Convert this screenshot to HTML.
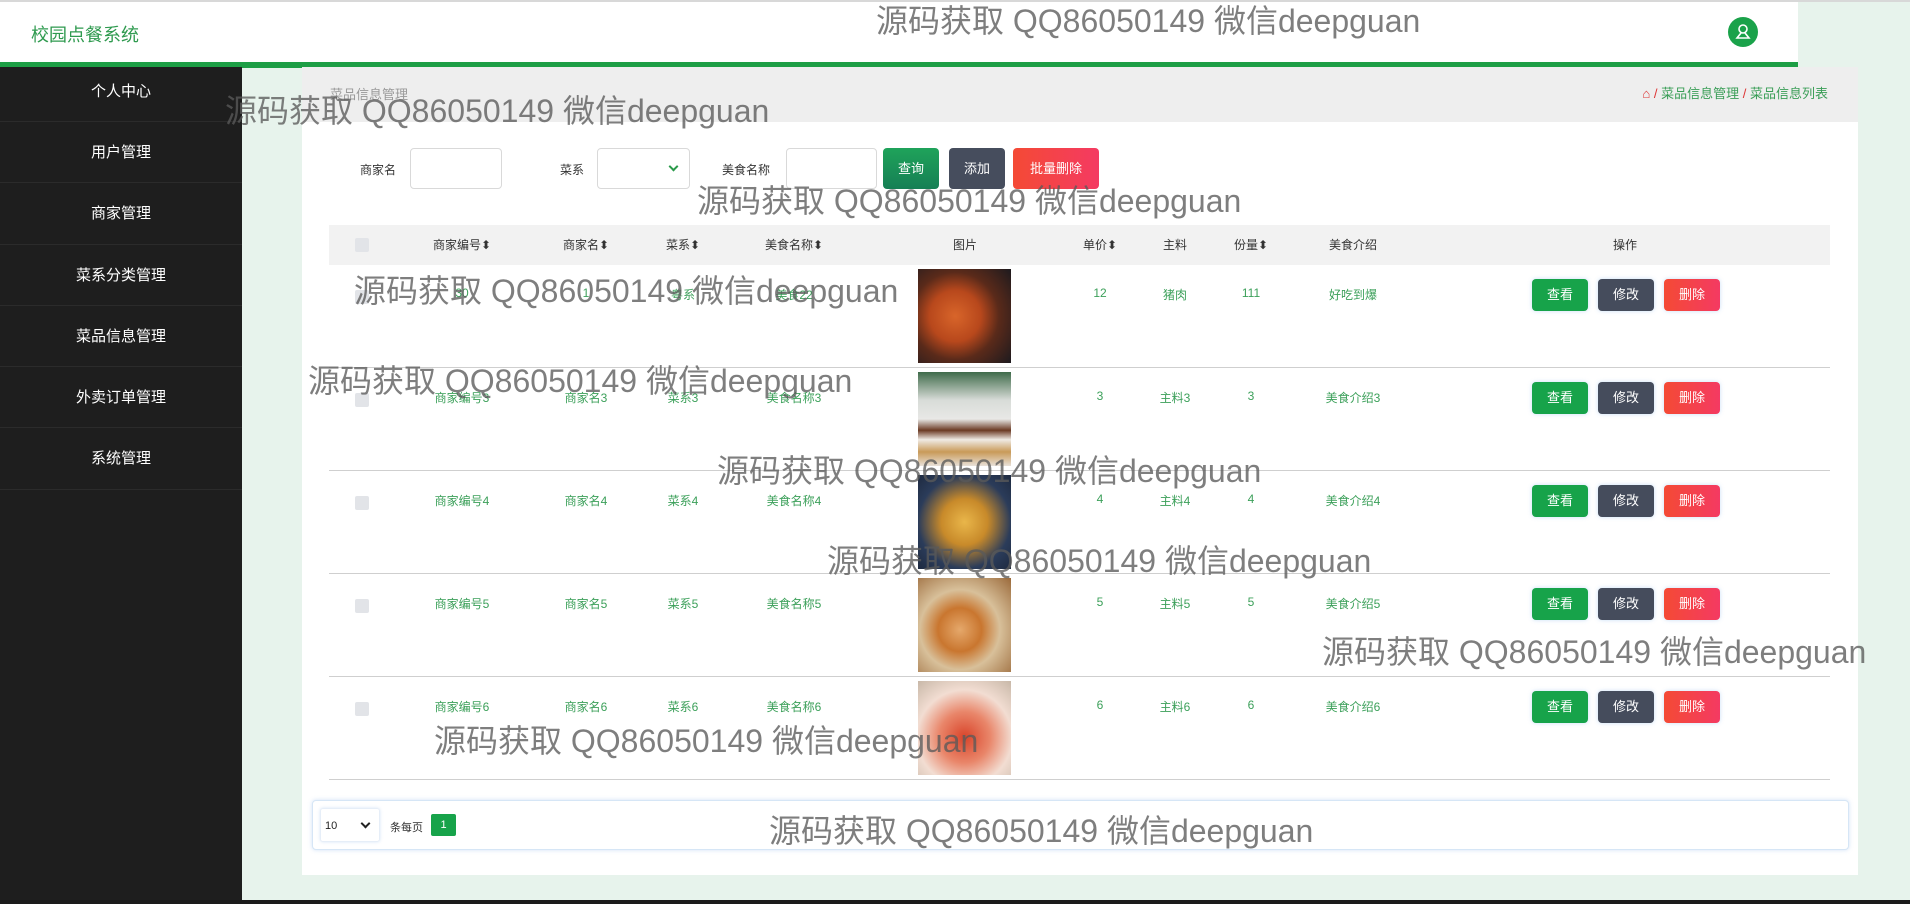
<!DOCTYPE html>
<html><head><meta charset="utf-8"><style>
*{margin:0;padding:0;box-sizing:border-box}
body{width:1910px;height:904px;overflow:hidden;background:#e7f3ec;font-family:"Liberation Sans","Noto Sans CJK SC",sans-serif;position:relative}
.a{position:absolute}
.side{left:0;top:67px;width:242px;height:837px;background:#1e1e1e}
.side div{height:61.3px;line-height:61px;text-align:center;color:#fff;font-size:15px;border-bottom:1px solid #2b2b2b}
.side div:first-child{height:55px;line-height:50px}
.wm{position:absolute;font-size:32px;color:rgba(90,90,90,.78);white-space:nowrap;font-family:"Liberation Sans","Noto Sans CJK SC",sans-serif;z-index:10;line-height:1}
.lbl{font-size:12px;color:#333}
.inp{border:1px solid #d9d9d9;border-radius:4px;background:#fff}
.btn{position:absolute;color:#fff;font-size:13px;text-align:center;border-radius:4px}
.th{position:absolute;top:225px;height:40px;line-height:40px;font-size:12px;color:#333;transform:translateX(-50%);white-space:nowrap}
.td{position:absolute;font-size:12px;color:#3ca05a;transform:translateX(-50%);white-space:nowrap}
.row{position:absolute;left:329px;width:1501px;height:103px;border-bottom:1px solid #cfcfcf}
.cb{position:absolute;left:355px;width:14px;height:14px;background:#e2e4e8;border-radius:2px}
.img{position:absolute;left:918px;width:93px;height:94px}
.b{position:absolute;height:32px;line-height:32px;width:56px;color:#fff;font-size:13px;text-align:center;border-radius:4px;box-shadow:0 0 4px rgba(100,160,230,.35)}
.chev{position:absolute;width:7px;height:7px;border-right:2px solid;border-bottom:2px solid;transform:rotate(45deg)}
</style></head><body>
<div class="a" style="left:0;top:0;width:1910px;height:2px;background:#d8d8d8"></div>
<div class="a" style="left:0;top:2px;width:1798px;height:60px;background:#fff"></div>
<div class="a" style="left:31px;top:21px;font-size:18px;color:#2f9a4f">校园点餐系统</div>
<div class="a" style="left:1728px;top:17px;width:30px;height:30px;border-radius:50%;background:#1aa24a">
<svg width="30" height="30" viewBox="0 0 30 30"><circle cx="15" cy="12" r="4" fill="none" stroke="#fff" stroke-width="1.6"/><path d="M13 16 L9 21 H21 L17 16" fill="none" stroke="#fff" stroke-width="1.6"/></svg></div>
<div class="a" style="left:0;top:62px;width:1798px;height:6px;background:#1d9e45"></div>
<div class="a side"><div>个人中心</div><div>用户管理</div><div>商家管理</div><div>菜系分类管理</div><div>菜品信息管理</div><div>外卖订单管理</div><div>系统管理</div></div>
<div class="a" style="left:302px;top:67px;width:1556px;height:808px;background:#fff"></div>
<div class="a" style="left:302px;top:67px;width:1556px;height:55px;background:#eeeeee"></div>
<div class="a" style="left:330px;top:84px;font-size:13px;color:#999">菜品信息管理</div>
<div class="a" style="right:82px;top:83px;font-size:13px;color:#3a9e57;white-space:nowrap"><span style="color:#d33">⌂</span> <span style="color:#d33">/</span> 菜品信息管理 <span style="color:#d33">/</span> 菜品信息列表</div>
<div class="a lbl" style="left:360px;top:161px">商家名</div>
<div class="a inp" style="left:410px;top:148px;width:92px;height:41px"></div>
<div class="a lbl" style="left:560px;top:161px">菜系</div>
<div class="a inp" style="left:597px;top:148px;width:93px;height:41px"><span class="chev" style="right:12px;top:14px;color:#2a9a4a"></span></div>
<div class="a lbl" style="left:722px;top:161px">美食名称</div>
<div class="a inp" style="left:786px;top:148px;width:91px;height:41px"></div>
<div class="btn" style="left:883px;top:148px;width:56px;height:41px;line-height:41px;background:linear-gradient(#1fa35a,#167f55)">查询</div>
<div class="btn" style="left:949px;top:148px;width:56px;height:41px;line-height:41px;background:#464d5d">添加</div>
<div class="btn" style="left:1013px;top:148px;width:86px;height:41px;line-height:41px;background:linear-gradient(90deg,#f44a35,#f43a62)">批量删除</div>
<div class="a" style="left:329px;top:225px;width:1501px;height:40px;background:#f2f2f2"></div>
<div class="cb" style="top:238px"></div>
<div class="th" style="left:462px">商家编号⬍</div><div class="th" style="left:586px">商家名⬍</div><div class="th" style="left:683px">菜系⬍</div><div class="th" style="left:794px">美食名称⬍</div><div class="th" style="left:965px">图片</div><div class="th" style="left:1100px">单价⬍</div><div class="th" style="left:1175px">主料</div><div class="th" style="left:1251px">份量⬍</div><div class="th" style="left:1353px">美食介绍</div><div class="th" style="left:1625px">操作</div>

<div class="row" style="top:265px"></div>
<div class="row" style="top:368px"></div>
<div class="row" style="top:471px"></div>
<div class="row" style="top:574px"></div>
<div class="row" style="top:677px"></div>

<div class="img" style="top:269px;background:radial-gradient(circle at 40% 50%,#d8652a 0,#b8481c 35%,#5a2a1a 60%,#1d1a1e 100%)"></div>
<div class="img" style="top:372px;background:linear-gradient(#3f6b4a 0,#d8dcd8 30%,#e8e8e6 50%,#6b3a24 62%,#efeae4 72%,#c99a58 85%,#e8e0d8 100%)"></div>
<div class="img" style="top:475px;background:radial-gradient(circle at 50% 50%,#e9b64a 0,#c88a2a 35%,#2b3c5a 70%,#1e2a40 100%)"></div>
<div class="img" style="top:578px;background:radial-gradient(circle at 45% 55%,#e5a86b 0,#c9762f 30%,#d8c09a 55%,#9b6a3b 100%)"></div>
<div class="img" style="top:681px;background:radial-gradient(circle at 50% 60%,#d9442a 0,#e9866a 35%,#f2ddd2 65%,#c8b8a8 100%)"></div>

<div class="cb" style="top:290px"></div>
<div class="td" style="left:462px;top:286px">30</div><div class="td" style="left:586px;top:286px">1</div><div class="td" style="left:683px;top:286px">粤系</div><div class="td" style="left:794px;top:286px">美食22</div><div class="td" style="left:1100px;top:286px">12</div><div class="td" style="left:1175px;top:286px">猪肉</div><div class="td" style="left:1251px;top:286px">111</div><div class="td" style="left:1353px;top:286px">好吃到爆</div>
<div class="cb" style="top:393px"></div>
<div class="td" style="left:462px;top:389px">商家编号3</div><div class="td" style="left:586px;top:389px">商家名3</div><div class="td" style="left:683px;top:389px">菜系3</div><div class="td" style="left:794px;top:389px">美食名称3</div><div class="td" style="left:1100px;top:389px">3</div><div class="td" style="left:1175px;top:389px">主料3</div><div class="td" style="left:1251px;top:389px">3</div><div class="td" style="left:1353px;top:389px">美食介绍3</div>
<div class="cb" style="top:496px"></div>
<div class="td" style="left:462px;top:492px">商家编号4</div><div class="td" style="left:586px;top:492px">商家名4</div><div class="td" style="left:683px;top:492px">菜系4</div><div class="td" style="left:794px;top:492px">美食名称4</div><div class="td" style="left:1100px;top:492px">4</div><div class="td" style="left:1175px;top:492px">主料4</div><div class="td" style="left:1251px;top:492px">4</div><div class="td" style="left:1353px;top:492px">美食介绍4</div>
<div class="cb" style="top:599px"></div>
<div class="td" style="left:462px;top:595px">商家编号5</div><div class="td" style="left:586px;top:595px">商家名5</div><div class="td" style="left:683px;top:595px">菜系5</div><div class="td" style="left:794px;top:595px">美食名称5</div><div class="td" style="left:1100px;top:595px">5</div><div class="td" style="left:1175px;top:595px">主料5</div><div class="td" style="left:1251px;top:595px">5</div><div class="td" style="left:1353px;top:595px">美食介绍5</div>
<div class="cb" style="top:702px"></div>
<div class="td" style="left:462px;top:698px">商家编号6</div><div class="td" style="left:586px;top:698px">商家名6</div><div class="td" style="left:683px;top:698px">菜系6</div><div class="td" style="left:794px;top:698px">美食名称6</div><div class="td" style="left:1100px;top:698px">6</div><div class="td" style="left:1175px;top:698px">主料6</div><div class="td" style="left:1251px;top:698px">6</div><div class="td" style="left:1353px;top:698px">美食介绍6</div>

<div class="b" style="left:1532px;top:279px;background:#17a34a">查看</div><div class="b" style="left:1598px;top:279px;background:#454c5c">修改</div><div class="b" style="left:1664px;top:279px;background:linear-gradient(90deg,#f44a35,#f43a62)">删除</div>
<div class="b" style="left:1532px;top:382px;background:#17a34a">查看</div><div class="b" style="left:1598px;top:382px;background:#454c5c">修改</div><div class="b" style="left:1664px;top:382px;background:linear-gradient(90deg,#f44a35,#f43a62)">删除</div>
<div class="b" style="left:1532px;top:485px;background:#17a34a">查看</div><div class="b" style="left:1598px;top:485px;background:#454c5c">修改</div><div class="b" style="left:1664px;top:485px;background:linear-gradient(90deg,#f44a35,#f43a62)">删除</div>
<div class="b" style="left:1532px;top:588px;background:#17a34a">查看</div><div class="b" style="left:1598px;top:588px;background:#454c5c">修改</div><div class="b" style="left:1664px;top:588px;background:linear-gradient(90deg,#f44a35,#f43a62)">删除</div>
<div class="b" style="left:1532px;top:691px;background:#17a34a">查看</div><div class="b" style="left:1598px;top:691px;background:#454c5c">修改</div><div class="b" style="left:1664px;top:691px;background:linear-gradient(90deg,#f44a35,#f43a62)">删除</div>

<div class="a" style="left:312px;top:800px;width:1537px;height:50px;border:1px solid #d6e6f6;border-radius:4px;box-shadow:0 0 4px rgba(120,170,230,.35);background:#fff"></div>
<div class="a" style="left:320px;top:808px;width:60px;height:34px;border:1px solid #e6eef8;border-radius:3px;box-shadow:0 0 3px rgba(120,170,230,.3);font-size:11px;line-height:34px;padding-left:4px;color:#222">10<span class="chev" style="right:10px;top:11px;color:#222"></span></div>
<div class="a" style="left:390px;top:819px;font-size:11px;color:#333">条每页</div>
<div class="a" style="left:431px;top:814px;width:25px;height:22px;background:#17a34a;color:#fff;font-size:11px;text-align:center;line-height:22px;border-radius:2px">1</div>
<div class="a" style="left:0;top:900px;width:1910px;height:4px;background:#1b1b1b"></div>

<div class="wm" style="left:876px;top:5px">源码获取 QQ86050149 微信deepguan</div>
<div class="wm" style="left:225px;top:95px">源码获取 QQ86050149 微信deepguan</div>
<div class="wm" style="left:697px;top:185px">源码获取 QQ86050149 微信deepguan</div>
<div class="wm" style="left:354px;top:275px">源码获取 QQ86050149 微信deepguan</div>
<div class="wm" style="left:308px;top:365px">源码获取 QQ86050149 微信deepguan</div>
<div class="wm" style="left:717px;top:455px">源码获取 QQ86050149 微信deepguan</div>
<div class="wm" style="left:827px;top:545px">源码获取 QQ86050149 微信deepguan</div>
<div class="wm" style="left:1322px;top:636px">源码获取 QQ86050149 微信deepguan</div>
<div class="wm" style="left:434px;top:725px">源码获取 QQ86050149 微信deepguan</div>
<div class="wm" style="left:769px;top:815px">源码获取 QQ86050149 微信deepguan</div>
</body></html>
